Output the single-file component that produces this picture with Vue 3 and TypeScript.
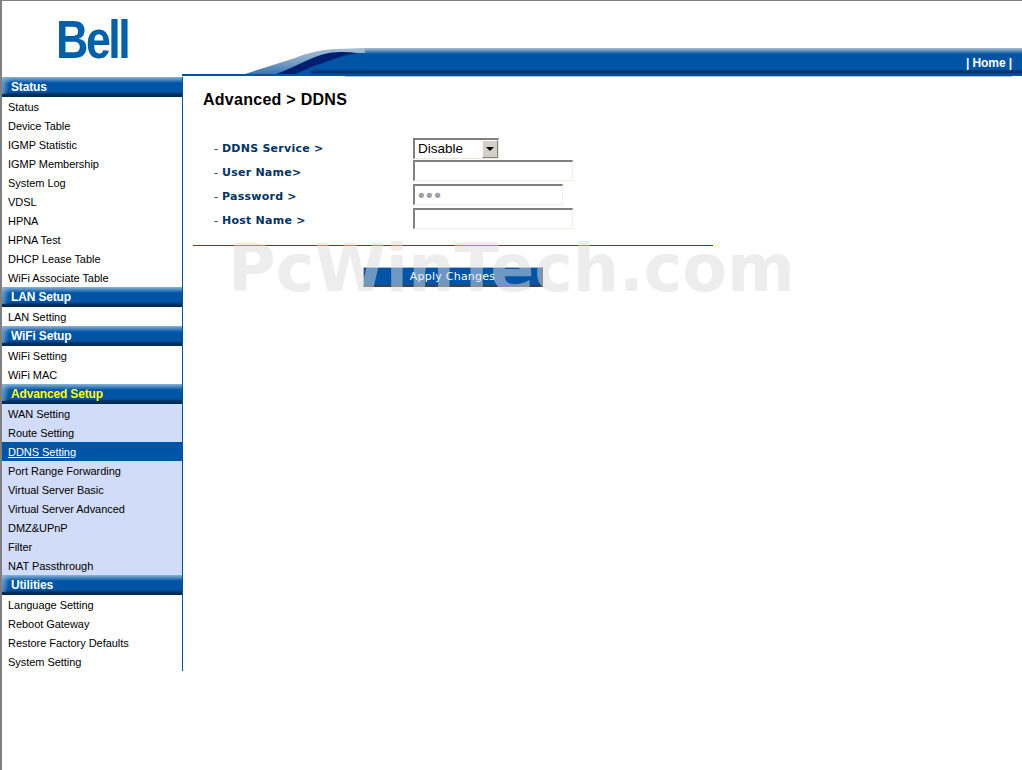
<script setup lang="ts">
import { ref } from 'vue'

type MenuGroup = { title: string; active?: boolean; items: string[] }

const groups: MenuGroup[] = [
  {
    title: 'Status',
    items: ['Status', 'Device Table', 'IGMP Statistic', 'IGMP Membership', 'System Log', 'VDSL', 'HPNA', 'HPNA Test', 'DHCP Lease Table', 'WiFi Associate Table'],
  },
  { title: 'LAN Setup', items: ['LAN Setting'] },
  { title: 'WiFi Setup', items: ['WiFi Setting', 'WiFi MAC'] },
  {
    title: 'Advanced Setup',
    active: true,
    items: ['WAN Setting', 'Route Setting', 'DDNS Setting', 'Port Range Forwarding', 'Virtual Server Basic', 'Virtual Server Advanced', 'DMZ&UPnP', 'Filter', 'NAT Passthrough'],
  },
  { title: 'Utilities', items: ['Language Setting', 'Reboot Gateway', 'Restore Factory Defaults', 'System Setting'] },
]

const current = 'DDNS Setting'
const service = ref('Disable')
const userName = ref('')
const password = ref('abc')
const hostName = ref('')
</script>

<template>
  <div class="page">
    <header class="header">
      <div class="logo-cell"><span class="logo">Bell</span></div>
      <div class="banner">
        <svg class="swoosh" width="120" height="28" viewBox="0 0 120 28">
          <defs>
            <linearGradient id="fade" x1="0" y1="0" x2="0" y2="1">
              <stop offset="0" stop-color="#a9bfd2" />
              <stop offset="0.5" stop-color="#7aa0c4" />
              <stop offset="1" stop-color="#2f6cab" />
            </linearGradient>
            <linearGradient id="low" x1="0" y1="0" x2="0" y2="1">
              <stop offset="0" stop-color="#0054a6" />
              <stop offset="0.43" stop-color="#002f66" />
              <stop offset="0.71" stop-color="#0a4a8c" />
              <stop offset="1" stop-color="#0054a6" />
            </linearGradient>
          </defs>
          <path d="M0 26 L50 10 C60 6 72 2 90 1 L120 0 L120 28 L0 28 Z" fill="url(#fade)" />
          <path d="M28 27 C50 20 66 8 84 5 C92 4 102 3.5 112 5 L112 27 Z" fill="#001f6e" />
          <path d="M48 27 C60 22 70 17 78 15 C88 11 100 7 112 5 L120 5 L120 27 Z" fill="#0054a6" />
          <rect x="0" y="26" width="100" height="2" fill="#0054a6" />
          <rect x="66" y="21" width="54" height="7" fill="url(#low)" />
        </svg>
        <div class="bar"><span class="home">| Home |</span></div>
      </div>
    </header>

    <div class="body">
      <nav class="sidebar">
        <template v-for="group in groups" :key="group.title">
          <div class="group-title" :class="{ on: group.active }">{{ group.title }}</div>
          <div class="group-items" :class="{ on: group.active }">
            <a v-for="item in group.items" :key="item" class="item" :class="{ current: item === current }">{{ item }}</a>
          </div>
        </template>
      </nav>

      <main class="content">
        <h1 class="title">Advanced &gt; DDNS</h1>
        <form class="form" @submit.prevent>
          <label class="row">
            <span class="label">- <b>DDNS Service &gt;</b></span>
            <span class="select-wrap">
              <select v-model="service" class="select">
                <option>Disable</option>
                <option>Enable</option>
              </select>
              <span class="select-btn"></span>
            </span>
          </label>
          <label class="row">
            <span class="label">- <b>User Name&gt;</b></span>
            <input v-model="userName" class="input" type="text" />
          </label>
          <label class="row">
            <span class="label">- <b>Password &gt;</b></span>
            <input v-model="password" class="input short" type="password" />
          </label>
          <label class="row">
            <span class="label">- <b>Host Name &gt;</b></span>
            <input v-model="hostName" class="input" type="text" />
          </label>
          <div class="rule"></div>
          <div class="actions"><button class="apply" type="button">Apply Changes</button></div>
        </form>
      </main>
    </div>

    <div class="watermark">PcWinTech.com</div>
  </div>
</template>

<style>
html,
body {
  margin: 0;
  background: #fff;
}
</style>

<style scoped>
.page {
  position: relative;
  box-sizing: border-box;
  width: 1022px;
  height: 770px;
  overflow: hidden;
  border-top: 1px solid #808080;
  border-left: 2px solid #808080;
  background: #fff;
  font-family: "Liberation Sans", Arial, sans-serif;
}

.header {
  display: flex;
  height: 75px;
}

.logo-cell {
  width: 243px;
  padding: 9px 0 0 54px;
  box-sizing: border-box;
  background: linear-gradient(90deg, transparent 180px, #0054a6 180px) bottom / 100% 2px no-repeat;
}

.logo {
  display: block;
  width: 90px;
  font-size: 54px;
  line-height: 58px;
  font-weight: 700;
  letter-spacing: -3px;
  color: #0060a9;
  transform: scaleX(0.83);
  transform-origin: left top;
}

.banner {
  flex: 1;
  display: flex;
  align-items: flex-end;
}

.swoosh {
  display: block;
  flex: none;
}

.bar {
  flex: 1;
  height: 28px;
  box-sizing: border-box;
  text-align: right;
  padding: 8px 10px 0 0;
  background: linear-gradient(#a9bfd2 0, #5f8fb9 3px, #0054a6 6px, #0054a6 21px, #002f66 24px, #0a4a8c 26px, #0054a6 28px);
  color: #fff;
  font-size: 12px;
  font-weight: 700;
  line-height: 14px;
  letter-spacing: -0.1px;
}

.body {
  display: flex;
  align-items: flex-start;
  margin-top: 1px;
}

.sidebar {
  width: 181px;
  box-sizing: border-box;
  border-right: 1px solid #0054a6;
  flex: none;
}

.group-title {
  height: 20px;
  box-sizing: border-box;
  padding: 3px 0 0 9px;
  font-size: 12px;
  line-height: 14px;
  font-weight: 700;
  letter-spacing: -0.15px;
  color: #fff;
  background:
    linear-gradient(100deg, rgba(150, 190, 225, 0.75) 0, rgba(120, 170, 215, 0.6) 4px, rgba(120, 170, 215, 0) 9px) 0 0 / 100% 17px no-repeat,
    linear-gradient(#8fb3d5 0, #5c93c6 2px, #0054a6 6px, #0054a6 15px, #00315f 17px, #002a50 20px);
}

.group-title.on {
  color: #ff0;
}

.group-items.on {
  background: #d1dcf8;
}

.item {
  display: block;
  height: 19px;
  box-sizing: border-box;
  padding: 1px 0 0 6px;
  font-size: 11px;
  line-height: 19px;
  letter-spacing: -0.04px;
  color: #000;
}

.item.current {
  background: #0054a6;
  color: #fff;
  text-decoration: underline;
}

.content {
  flex: 1;
  margin-top: -1px;
  padding: 15px 0 0 10px;
  background: linear-gradient(90deg, transparent 162px, #a9bfd2 162px, #a9bfd2 829px, transparent 829px) top / 100% 1px no-repeat;
}

.title {
  margin: 0 0 0 10px;
  font-size: 16px;
  line-height: 18px;
  font-weight: 700;
  letter-spacing: 0.27px;
  color: #000;
}

.form {
  margin-top: 27px;
  width: 520px;
}

.row {
  display: flex;
  align-items: center;
  height: 24px;
}

.label {
  width: 220px;
  padding-left: 21px;
  box-sizing: border-box;
  font-family: "DejaVu Sans", Verdana, sans-serif;
  font-size: 11px;
  letter-spacing: 0.25px;
  color: #003366;
}

.select-wrap {
  position: relative;
  display: block;
  width: 86px;
  height: 21px;
}

.select {
  appearance: none;
  display: block;
  width: 100%;
  height: 100%;
  box-sizing: border-box;
  margin: 0;
  padding: 0 0 0 3px;
  border-style: solid;
  border-width: 2px 1px 1px 2px;
  border-color: #808080 #ece9d8 #ece9d8 #808080;
  border-radius: 0;
  background: #fff;
  color: #000;
  font-family: "Liberation Sans", Arial, sans-serif;
  font-size: 13.5px;
  outline: none;
}

.select-btn {
  position: absolute;
  right: 1px;
  top: 2px;
  width: 16px;
  height: 18px;
  box-sizing: border-box;
  border-style: solid;
  border-width: 1px;
  border-color: #fff #808080 #808080 #fff;
  background: #d4d0c8;
  pointer-events: none;
}

.select-btn::after {
  content: "";
  position: absolute;
  left: 3px;
  top: 6px;
  border-style: solid;
  border-width: 4px 4px 0;
  border-color: #000 transparent transparent;
}

.input {
  width: 160px;
  height: 21px;
  box-sizing: border-box;
  margin-bottom: 3px;
  border-style: solid;
  border-width: 2px 1px 1px 2px;
  border-color: #808080 #f1efe2 #f1efe2 #808080;
  background: #fff;
  padding: 0 2px;
  outline: none;
}

.input.short {
  width: 150px;
  padding-left: 1px;
  color: #a0a0a0;
  font-family: "DejaVu Sans", sans-serif;
  font-size: 18px;
  letter-spacing: -2.5px;
}

.rule {
  height: 1px;
  margin-top: 13px;
  background: #0054a6;
}

.actions {
  display: flex;
  justify-content: center;
  margin-top: 21px;
}

.apply {
  width: 180px;
  height: 20px;
  padding: 0;
  border-style: solid;
  border-width: 1px 2px 2px 1px;
  border-color: #a8b4d0 #404040 #404040 #a8b4d0;
  background: #0054a6;
  color: #fff;
  font-family: "DejaVu Sans", Verdana, sans-serif;
  font-size: 11px;
  letter-spacing: 0.25px;
}

.watermark {
  position: absolute;
  left: 226px;
  top: 233px;
  font-family: "DejaVu Sans", Verdana, sans-serif;
  font-size: 65px;
  line-height: 70px;
  font-weight: 700;
  color: #dcdcdc;
  opacity: 0.5;
  pointer-events: none;
}
</style>
